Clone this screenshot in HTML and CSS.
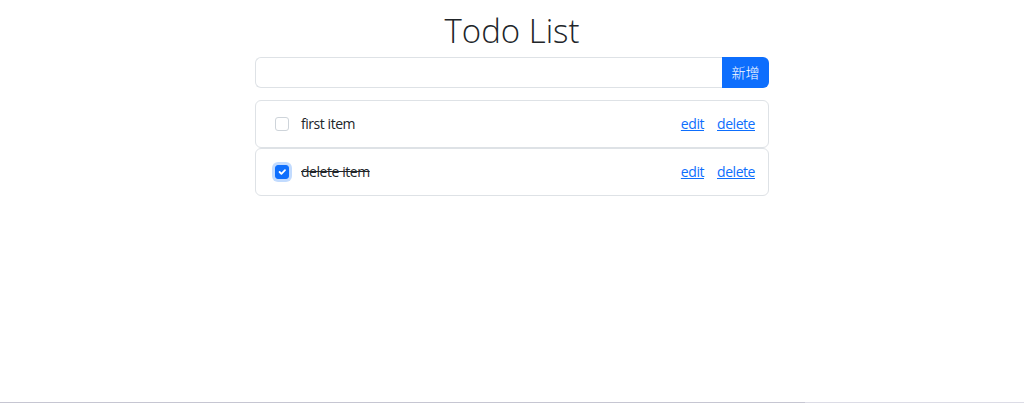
FILE: index.html
```html
<!DOCTYPE html>
<html lang="zh-Hant">
<head>
<meta charset="utf-8">
<title>Todo List</title>
<link rel="stylesheet" href="styles.css">
</head>
<body>
<main class="container">
  <h1 class="title">Todo List</h1>
  <form class="input-group">
    <input class="form-control" type="text">
    <button class="btn-add" type="button">新增</button>
  </form>
  <ul class="todo-list">
    <li class="todo-item">
      <span class="check"></span>
      <span class="todo-text">first item</span>
      <span class="actions"><a href="#">edit</a><a href="#">delete</a></span>
    </li>
    <li class="todo-item">
      <span class="check checked"><svg viewBox="0 0 20 20" width="14" height="14"><path d="M6 10l3 3 6-6" fill="none" stroke="#fff" stroke-width="3" stroke-linecap="round" stroke-linejoin="round"/></svg></span>
      <span class="todo-text done">delete item</span>
      <span class="actions"><a href="#">edit</a><a href="#">delete</a></span>
    </li>
  </ul>
</main>
<div class="scrollbar"><div class="thumb"></div></div>
</body>
</html>
```
FILE: styles.css
```css
* { box-sizing: border-box; }
html, body { height: 100%; }
body {
  margin: 0;
  font-family: "Open Sans", "Noto Sans CJK TC", sans-serif;
  color: #212529;
  background: #fff;
  display: flex;
  flex-direction: column;
}
.container {
  width: 514px;
  margin: 0 auto;
  flex: 1;
}
.title {
  margin: 11px 0 6px;
  font-size: 33px;
  font-weight: 300;
  line-height: 1.2;
  text-align: center;
}
.input-group {
  display: flex;
  height: 31px;
  margin: 0;
}
.form-control {
  flex: 1;
  min-width: 0;
  border: 1px solid #dee2e6;
  border-right: 0;
  border-radius: 6px 0 0 6px;
  font: inherit;
  font-size: 14px;
  padding: 4px 8px;
}
.btn-add {
  width: 47px;
  border: 0;
  background: #0d6efd;
  color: #fff;
  border-radius: 0 6px 6px 0;
  font-family: "Noto Sans CJK TC", sans-serif;
  font-size: 14px;
  font-weight: 300;
  padding: 0;
}
.todo-list {
  list-style: none;
  margin: 12px 0 0;
  padding: 0;
}
.todo-item {
  height: 48px;
  display: flex;
  align-items: center;
  border: 1px solid #dee2e6;
  border-radius: 6px;
  padding: 0 13px 0 19px;
  font-size: 14px;
  letter-spacing: -0.45px;
}
.check {
  width: 14px;
  height: 14px;
  border: 1px solid #ced4da;
  border-radius: 3px;
  margin-right: 12px;
  display: flex;
  align-items: center;
  justify-content: center;
}
.check.checked {
  background: #0d6efd;
  border-color: #0d6efd;
  box-shadow: 0 0 0 3px rgba(13, 110, 253, 0.25);
}
.check svg { display: block; }
.todo-text { flex: 1; }
.todo-text.done { text-decoration: line-through; }
.actions { display: flex; gap: 13px; }
.actions a { color: #0d6efd; text-decoration: underline; }
.scrollbar {
  height: 1px;
  background: #dcdce6;
}
.thumb {
  width: 805px;
  height: 1px;
  background: #c6c6d2;
}
```
